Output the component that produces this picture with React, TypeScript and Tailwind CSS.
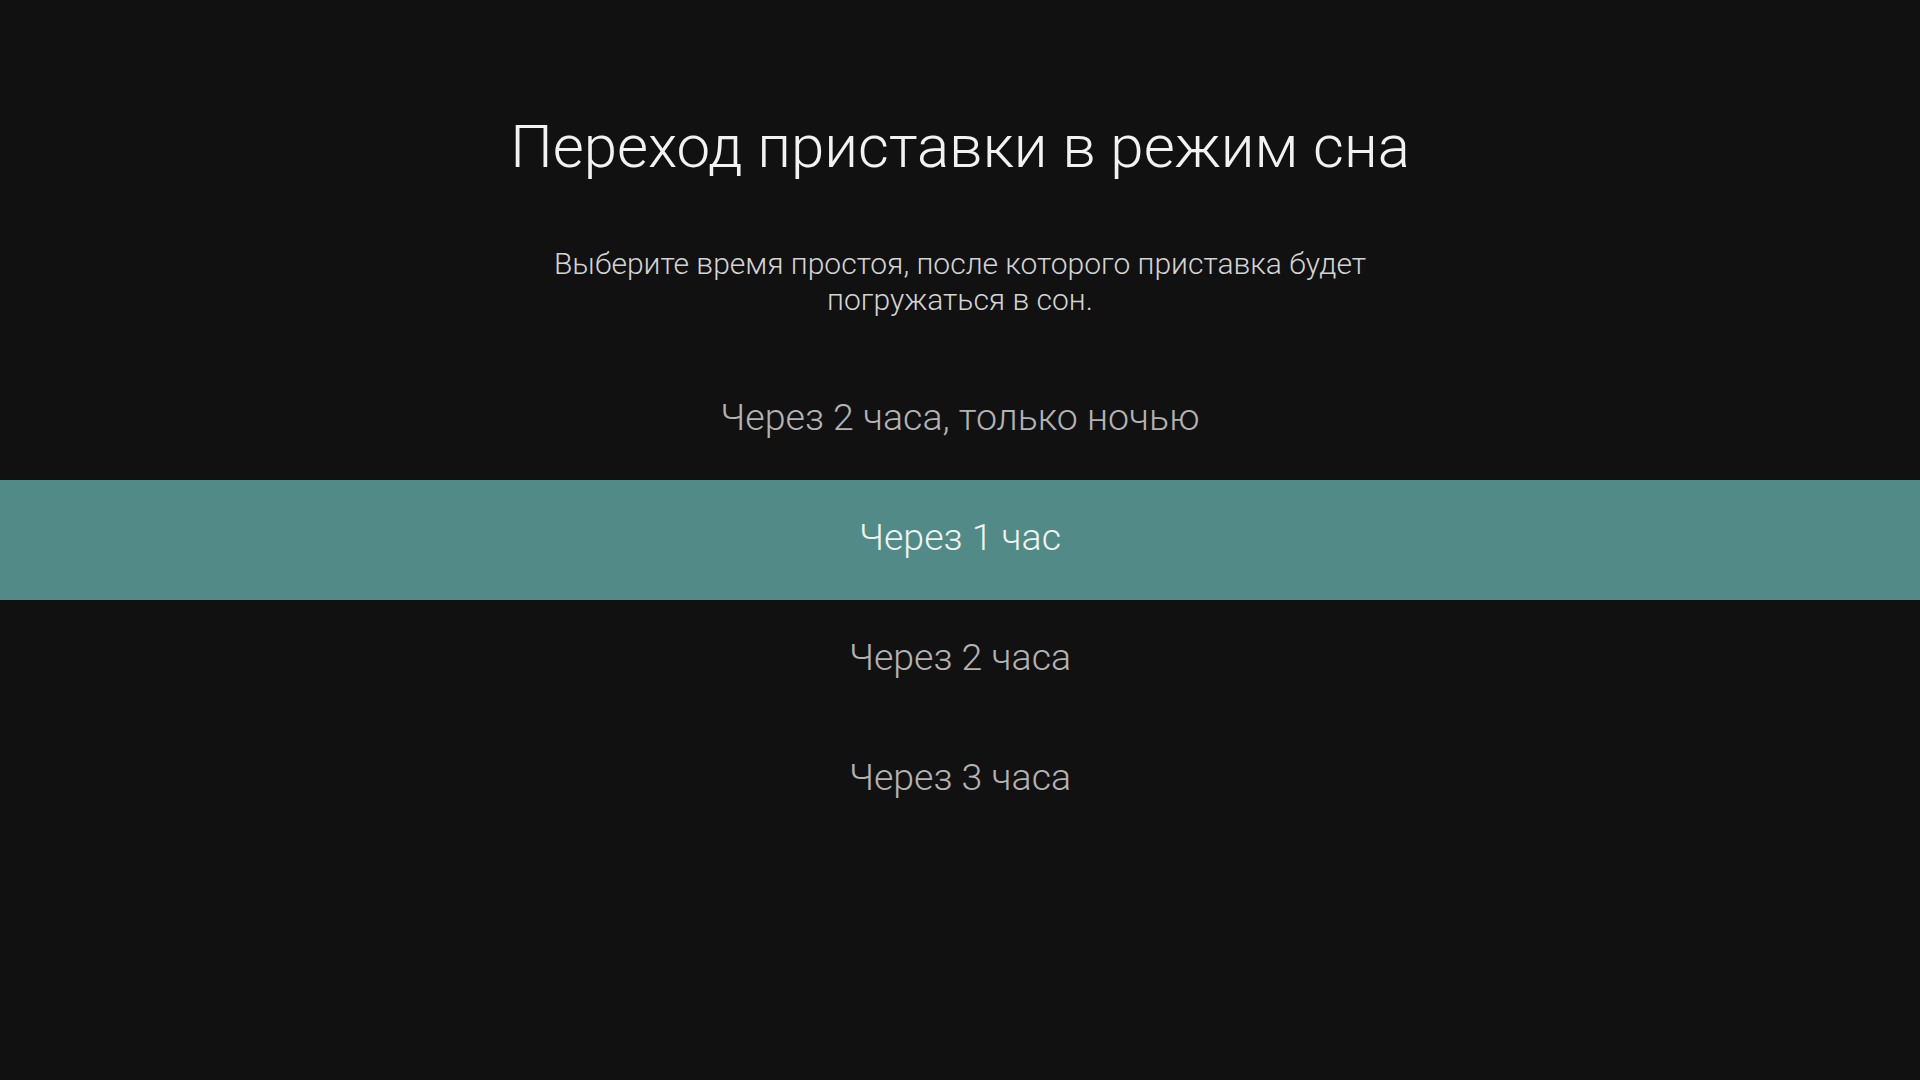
import React from "react";

const options = [
  "Через 2 часа, только ночью",
  "Через 1 час",
  "Через 2 часа",
  "Через 3 часа",
];

export default function App() {
  const selected = 1;
  return (
    <div
      className="w-[1920px] h-[1080px] bg-[#111111] flex flex-col items-center overflow-hidden"
      style={{ fontFamily: "Roboto, 'Noto Sans', sans-serif" }}
    >
      <h1 className="mt-[107px] h-[80px] flex items-center text-[60px] font-light text-[#f2f2f2] leading-none">
        Переход приставки в режим сна
      </h1>
      <p className="mt-[59px] w-[860px] text-center text-[30px] font-light leading-[36px] text-[#d4d4d4]">
        Выберите время простоя, после которого приставка будет погружаться в сон.
      </p>
      <div className="mt-[42px] w-full flex flex-col">
        {options.map((o, i) => (
          <div
            key={o}
            className={
              i === selected
                ? "h-[120px] w-full flex items-center justify-center pb-[5px] bg-[#518a86] text-[#eef4f3] text-[37.5px] font-light"
                : "h-[120px] w-full flex items-center justify-center pb-[5px] text-[#b3b3b3] text-[37.5px] font-light"
            }
          >
            {o}
          </div>
        ))}
      </div>
    </div>
  );
}
